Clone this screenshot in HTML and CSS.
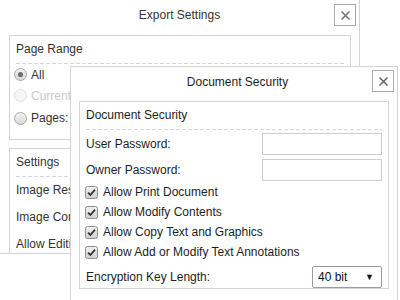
FILE: index.html
```html
<!DOCTYPE html>
<html>
<head>
<meta charset="utf-8">
<title>Export Settings</title>
<link rel="stylesheet" href="styles.css">
</head>
<body>
<div class="dialog export">
  <div class="dlg-head">
    <span class="dlg-title">Export Settings</span>
    <span class="close"><svg width="9" height="9" viewBox="0 0 9 9"><path d="M0.5 0.5L8.5 8.5M8.5 0.5L0.5 8.5" stroke="#6f7380" stroke-width="1.5" fill="none"/></svg></span>
  </div>
  <div class="dlg-body export-body">
    <div class="group">
      <div class="group-title">Page Range</div>
      <div class="group-body range-body">
        <div class="opt"><svg class="radio" width="13" height="13" viewBox="0 0 13 13"><defs><linearGradient id="rg" x1="0" y1="0" x2="0" y2="1"><stop offset="0" stop-color="#f4f4f4"/><stop offset="1" stop-color="#d6d6d6"/></linearGradient></defs><circle cx="6.5" cy="6.5" r="6" fill="url(#rg)" stroke="#a9a9a9"/><circle cx="6.5" cy="6.5" r="2.6" fill="#707070"/></svg><span>All</span></div>
        <div class="opt disabled"><svg class="radio" width="13" height="13" viewBox="0 0 13 13"><circle cx="6.5" cy="6.5" r="6" fill="#f6f6f6" stroke="#dedede"/></svg><span>Current Page</span></div>
        <div class="opt tall"><svg class="radio" width="13" height="13" viewBox="0 0 13 13"><circle cx="6.5" cy="6.5" r="6" fill="url(#rg)" stroke="#a9a9a9"/></svg><span>Pages:</span></div>
      </div>
    </div>
    <div class="group settings">
      <div class="group-title">Settings</div>
      <div class="group-body">
        <div class="row27">Image Resolution:</div>
        <div class="row27">Image Compression:</div>
        <div class="row27">Allow Editing:</div>
      </div>
    </div>
  </div>
</div>

<div class="dialog security">
  <div class="dlg-head sec-head">
    <span class="dlg-title">Document Security</span>
    <span class="close"><svg width="9" height="9" viewBox="0 0 9 9"><path d="M0.5 0.5L8.5 8.5M8.5 0.5L0.5 8.5" stroke="#5e6272" stroke-width="1.5" fill="none"/></svg></span>
  </div>
  <div class="dlg-body sec-body">
    <div class="group">
      <div class="group-title">Document Security</div>
      <div class="group-body sec-fields">
        <div class="field"><span>User Password:</span><span class="input"></span></div>
        <div class="field second"><span>Owner Password:</span><span class="input"></span></div>
        <div class="check first"><svg class="cb" width="13" height="13" viewBox="0 0 13 13"><defs><linearGradient id="cg" x1="0" y1="0" x2="0" y2="1"><stop offset="0" stop-color="#f2f2f2"/><stop offset="1" stop-color="#cfcfcf"/></linearGradient></defs><rect x="0.5" y="0.5" width="12" height="12" rx="2" fill="url(#cg)" stroke="#8e8e8e"/><path d="M3 6.6L5.4 9L10 3.6" stroke="#333" stroke-width="1.8" fill="none"/></svg><span>Allow Print Document</span></div>
        <div class="check"><svg class="cb" width="13" height="13" viewBox="0 0 13 13"><rect x="0.5" y="0.5" width="12" height="12" rx="2" fill="url(#cg)" stroke="#8e8e8e"/><path d="M3 6.6L5.4 9L10 3.6" stroke="#333" stroke-width="1.8" fill="none"/></svg><span>Allow Modify Contents</span></div>
        <div class="check"><svg class="cb" width="13" height="13" viewBox="0 0 13 13"><rect x="0.5" y="0.5" width="12" height="12" rx="2" fill="url(#cg)" stroke="#8e8e8e"/><path d="M3 6.6L5.4 9L10 3.6" stroke="#333" stroke-width="1.8" fill="none"/></svg><span>Allow Copy Text and Graphics</span></div>
        <div class="check"><svg class="cb" width="13" height="13" viewBox="0 0 13 13"><rect x="0.5" y="0.5" width="12" height="12" rx="2" fill="url(#cg)" stroke="#8e8e8e"/><path d="M3 6.6L5.4 9L10 3.6" stroke="#333" stroke-width="1.8" fill="none"/></svg><span>Allow Add or Modify Text Annotations</span></div>
        <div class="field enc"><span>Encryption Key Length:</span><span class="select"><span>40 bit</span><span class="arrow">▼</span></span></div>
      </div>
    </div>
  </div>
</div>
</body>
</html>
```

FILE: styles.css
```css
* { box-sizing: border-box; }
html, body { margin: 0; padding: 0; }
body {
  width: 400px;
  height: 300px;
  overflow: hidden;
  position: relative;
  background: #fff;
  font-family: "Liberation Sans", Arial, sans-serif;
  font-size: 12px;
  color: #333;
}
.dialog {
  position: absolute;
  background: #fff;
  border: 1px solid #d4d4d4;
}
.export {
  left: -1px;
  top: -1px;
  width: 361px;
  height: 255px;
  overflow: hidden;
}
.security {
  left: 70px;
  top: 66px;
  width: 328px;
  height: 240px;
  color: #1e1e1e;
}
.dlg-head {
  position: relative;
  height: 30px;
  line-height: 30px;
  text-align: center;
  color: #333;
}
.sec-head { padding-left: 7px; color: #1e1e1e; }
.close {
  position: absolute;
  top: 4px;
  right: 3px;
  width: 22px;
  height: 22px;
  border: 1px solid #ababab;
  background: #fff;
  display: flex;
  align-items: center;
  justify-content: center;
}
.sec-head .close { top: 3px; }
.export-body { padding: 5px 8px 0 9px; }
.sec-body { padding: 4px 8px 0 8px; }
.group { border: 1px solid #d4d4d4; }
.group-title {
  height: 28px;
  line-height: 27px;
  margin: 0 6px;
  background-image: repeating-linear-gradient(to right, #d3d8e6 0 4px, transparent 4px 6px);
  background-size: 100% 1px;
  background-position: left bottom;
  background-repeat: no-repeat;
}
.range-body { padding: 0 0 9px 4px; }
.opt {
  display: flex;
  align-items: center;
  gap: 4px;
  height: 21px;
  white-space: nowrap;
}
.opt.tall { height: 24px; }
.opt.disabled { color: #c9c9c9; }
.settings { margin-top: 8px; }
.settings .group-body { padding: 0 6px; }
.row27 { height: 27px; line-height: 27px; white-space: nowrap; }
.sec-fields { padding: 3px 6px 0 6px; }
.field {
  display: flex;
  align-items: center;
  justify-content: space-between;
  height: 22px;
}
.field.second { margin-top: 4px; }
.input {
  width: 120px;
  height: 22px;
  border: 1px solid #cfcfcf;
  background: #fff;
}
.check {
  display: flex;
  align-items: center;
  gap: 5px;
  height: 20px;
  margin-left: -1px;
}
.check.first { margin-top: 1px; }
.field.enc { margin-top: 4px; }
.select {
  width: 70px;
  height: 22px;
  border: 1px solid #9c9c9c;
  border-radius: 2px;
  display: flex;
  align-items: center;
  justify-content: space-between;
  padding: 0 7px 0 5px;
  color: #111;
}
.arrow { font-size: 9px; }
```
